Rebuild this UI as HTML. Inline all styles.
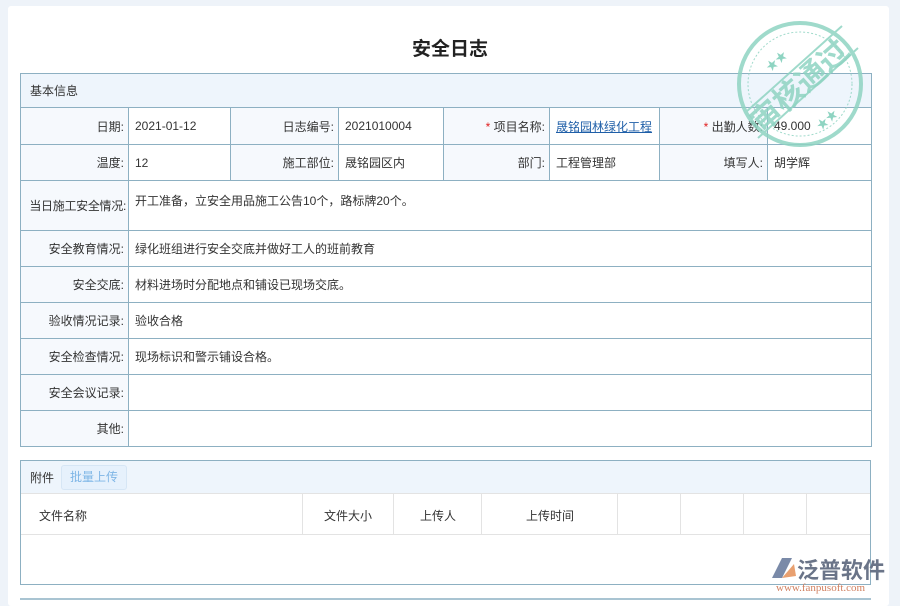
<!DOCTYPE html>
<html><head><meta charset="utf-8"><style>
*{margin:0;padding:0;box-sizing:border-box}
body{width:900px;height:600px;background:#eef3f9;font-family:"Liberation Sans","Noto Sans CJK SC",sans-serif;font-size:12px;color:#333;position:relative;overflow:hidden}
.card{position:absolute;left:8px;top:6px;width:881px;height:600px;background:#fff;border-radius:3px}
h1{position:absolute;left:0;width:900px;top:34px;text-align:center;font-size:19px;font-weight:bold;color:#222}
table{border-collapse:collapse;position:absolute;left:20px;width:851px;table-layout:fixed}
td{border:1px solid #8db0c2;padding:0 6px;vertical-align:middle;white-space:nowrap;overflow:hidden}
td.l{background:#f6f9fd;text-align:right;padding:0 4px 0 0}
.main td{height:36px}
.r{color:#e02020}
a{color:#1f5fa8;text-decoration:underline}
</style></head><body>
<div class="card"></div>
<h1>安全日志</h1>
<table class="main" style="top:73px">
<colgroup><col style="width:108px"><col style="width:102px"><col style="width:108px"><col style="width:105px"><col style="width:106px"><col style="width:110px"><col style="width:108px"><col style="width:104px"></colgroup>
<tr><td colspan="8" style="background:#eef5fc;height:34px;padding-left:9px">基本信息</td></tr>
<tr><td class="l" style="height:37px">日期:</td><td>2021-01-12</td><td class="l">日志编号:</td><td>2021010004</td><td class="l"><span class="r">* </span>项目名称:</td><td><a>晟铭园林绿化工程</a></td><td class="l"><span class="r">* </span>出勤人数:</td><td>49.000</td></tr>
<tr><td class="l">温度:</td><td>12</td><td class="l">施工部位:</td><td>晟铭园区内</td><td class="l">部门:</td><td>工程管理部</td><td class="l">填写人:</td><td>胡学辉</td></tr>
<tr><td class="l" style="height:50px;padding-right:2px;letter-spacing:-0.3px">当日施工安全情况:</td><td colspan="7" style="vertical-align:top;padding-top:11px">开工准备，立安全用品施工公告10个，路标牌20个。</td></tr>
<tr><td class="l">安全教育情况:</td><td colspan="7">绿化班组进行安全交底并做好工人的班前教育</td></tr>
<tr><td class="l">安全交底:</td><td colspan="7">材料进场时分配地点和铺设已现场交底。</td></tr>
<tr><td class="l">验收情况记录:</td><td colspan="7">验收合格</td></tr>
<tr><td class="l">安全检查情况:</td><td colspan="7">现场标识和警示铺设合格。</td></tr>
<tr><td class="l">安全会议记录:</td><td colspan="7"></td></tr>
<tr><td class="l">其他:</td><td colspan="7"></td></tr>
</table>
<div style="position:absolute;left:20px;top:460px;width:851px;height:125px;border:1px solid #8db0c2"></div>
<div style="position:absolute;left:21px;top:461px;width:849px;height:33px;background:#eef5fc;border-bottom:1px solid #e3e3e3"></div>
<div style="position:absolute;left:30px;top:469px">附件</div>
<div style="position:absolute;left:61px;top:465px;width:66px;height:25px;border:1px solid #d6e6f5;background:#e6f1fc;color:#7fb6e6;border-radius:3px;text-align:center;line-height:23px">批量上传</div>
<div style="position:absolute;left:21px;top:494px;width:849px;height:41px;border-bottom:1px solid #e3e3e3"></div>
<div style="position:absolute;left:39px;top:507px">文件名称</div>
<div style="position:absolute;left:324px;top:507px">文件大小</div>
<div style="position:absolute;left:420px;top:507px">上传人</div>
<div style="position:absolute;left:526px;top:507px">上传时间</div>
<div style="position:absolute;left:302px;top:494px;width:1px;height:40px;background:#e3e3e3"></div>
<div style="position:absolute;left:393px;top:494px;width:1px;height:40px;background:#e3e3e3"></div>
<div style="position:absolute;left:481px;top:494px;width:1px;height:40px;background:#e3e3e3"></div>
<div style="position:absolute;left:617px;top:494px;width:1px;height:40px;background:#e3e3e3"></div>
<div style="position:absolute;left:680px;top:494px;width:1px;height:40px;background:#e3e3e3"></div>
<div style="position:absolute;left:743px;top:494px;width:1px;height:40px;background:#e3e3e3"></div>
<div style="position:absolute;left:806px;top:494px;width:1px;height:40px;background:#e3e3e3"></div>
<div style="position:absolute;left:20px;top:598px;width:851px;height:2px;background:#a9c4d2"></div>
<svg style="position:absolute;left:732px;top:20px" width="140" height="135" viewBox="0 0 140 135">
<g fill="none" stroke="#8fd4c2" opacity="0.85">
<circle cx="68" cy="64" r="61" stroke-width="4"/>
<circle cx="68" cy="64" r="52" stroke-width="1" stroke-dasharray="2 2"/>
<line x1="14" y1="92" x2="110" y2="6" stroke-width="2"/>
<line x1="26" y1="118" x2="126" y2="28" stroke-width="2"/>
</g>
<text x="68" y="76" font-size="30" font-weight="bold" fill="#8fd4c2" opacity="0.85" text-anchor="middle" transform="rotate(-42 68 66)" font-family="Noto Sans CJK SC,sans-serif">审核通过</text>
<text x="36" y="50" font-size="12" fill="#8fd4c2" transform="rotate(-42 40 48)">★★</text>
<text x="84" y="108" font-size="12" fill="#8fd4c2" transform="rotate(-42 90 103)">★★</text>
</svg>
<svg style="position:absolute;left:768px;top:554px" width="30" height="28"><path d="M4 24 L14 4 L24 4 L14 24Z" fill="#7a8aa8"/><path d="M14 24 L26 10 L28 22Z" fill="#e8a070"/></svg>
<div style="position:absolute;left:797px;top:553px;font-size:22px;font-weight:bold;color:#6a7488;font-family:'Noto Sans CJK SC',sans-serif">泛普软件</div>
<div style="position:absolute;left:776px;top:582px;font-size:11px;color:#d08060;font-family:'Liberation Serif',serif">www.fanpusoft.com</div>
</body></html>
